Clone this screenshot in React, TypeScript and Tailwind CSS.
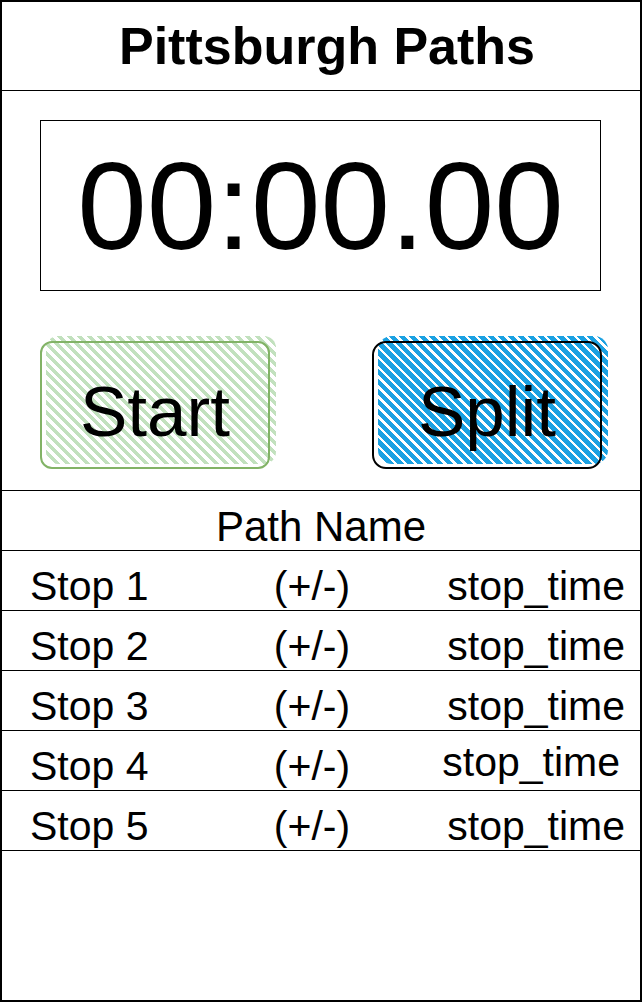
import React from 'react'

const stops = [
  { name: 'Stop 1', time: 'stop_time', timeClass: 'pr-[15px]' },
  { name: 'Stop 2', time: 'stop_time', timeClass: 'pr-[15px]' },
  { name: 'Stop 3', time: 'stop_time', timeClass: 'pr-[15px]' },
  { name: 'Stop 4', time: 'stop_time', timeClass: 'pr-[20px] -mt-2' },
  { name: 'Stop 5', time: 'stop_time', timeClass: 'pr-[15px]' },
]

function SketchButton({ label, variant }: { label: string; variant: 'green' | 'blue' }) {
  const green = variant === 'green'
  return (
    <button
      type="button"
      className={
        'relative w-[230px] h-[128px] ' +
        (green ? 'rounded-[12px]' : 'rounded-[14px]')
      }
    >
      {/* hatch fill, drawn a little off the outline like a sketch */}
      <span
        className={
          'absolute inset-0 translate-x-[6px] -translate-y-[5px] ' +
          (green
            ? 'rounded-[12px] bg-[repeating-linear-gradient(45deg,#c2e1be_0px,#c2e1be_3.5px,transparent_3.5px,transparent_7px)]'
            : 'rounded-[14px] bg-[repeating-linear-gradient(45deg,#1ba1e2_0px,#1ba1e2_4.5px,transparent_4.5px,transparent_7px)]')
        }
      />
      <span
        className={
          'absolute inset-0 border-2 ' +
          (green ? 'rounded-[12px] border-[#82b366]' : 'rounded-[14px] border-black')
        }
      />
      <span className="relative block pt-3 text-[71px] leading-none text-black">{label}</span>
    </button>
  )
}

export default function App() {
  return (
    <div
      className="w-[642px] h-[1002px] bg-white text-black flex flex-col border-2 border-black"
      style={{ fontFamily: '"Liberation Sans", Arial, sans-serif' }}
    >
      <header className="h-[89px] shrink-0 flex items-center justify-center border-b border-black">
        <h1 className="pl-3 text-[52px] font-bold leading-none">Pittsburgh Paths</h1>
      </header>

      <section className="h-[400px] shrink-0 flex flex-col border-b border-black">
        <div className="mt-[29px] ml-[38px] w-[561px] h-[171px] border border-black flex items-center justify-center">
          <span className="text-[125px] leading-none">00:00.00</span>
        </div>
        <div className="mt-[50px] flex justify-between pl-[38px] pr-[38px]">
          <SketchButton label="Start" variant="green" />
          <SketchButton label="Split" variant="blue" />
        </div>
      </section>

      <div className="h-[60px] shrink-0 flex items-center justify-center border-b border-black">
        <span className="pt-3 text-[42px] leading-none">Path Name</span>
      </div>

      {stops.map((stop) => (
        <div
          key={stop.name}
          className="h-[60px] shrink-0 grid grid-cols-[240px_140px_1fr] items-center border-b border-black text-[41px] leading-none"
        >
          <span className="pl-7 pt-3">{stop.name}</span>
          <span className="text-center pt-3">(+/-)</span>
          <span className={'text-right pt-3 ' + stop.timeClass}>{stop.time}</span>
        </div>
      ))}

      <div className="flex-1" />
    </div>
  )
}
